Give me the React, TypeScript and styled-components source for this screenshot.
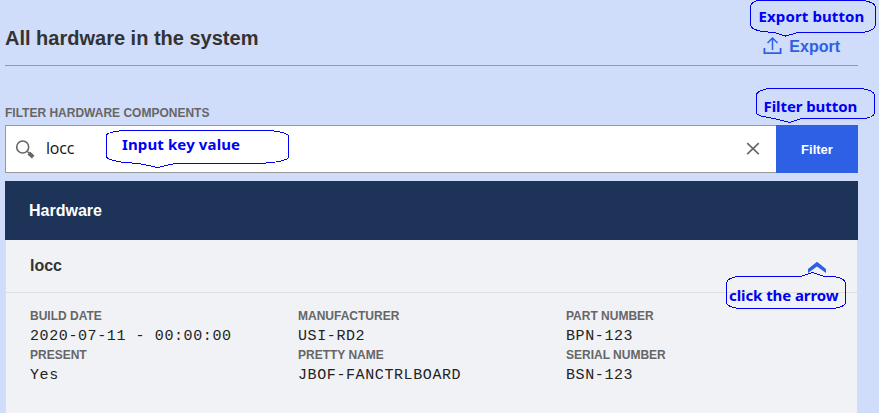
import React from 'react';
import styled, { createGlobalStyle } from 'styled-components';

const GlobalStyle = createGlobalStyle`
  *, *::before, *::after { box-sizing: border-box; }
  body {
    margin: 0;
    background: #cfdcfa;
    color: #333;
    font-family: "Liberation Sans", Arial, sans-serif;
    overflow: hidden;
  }
`;

const Page = styled.main`
  position: relative;
  width: 879px;
  height: 413px;
  padding: 0 21px 0 5px;
  overflow: hidden;
  display: flex;
  flex-direction: column;
`;

const Header = styled.header`
  display: flex;
  justify-content: space-between;
  align-items: flex-start;
  height: 66px;
  flex: none;
  border-bottom: 1px solid #999;
`;

const Title = styled.h1`
  margin: 26px 0 0;
  font-size: 20px;
  line-height: 24px;
  font-weight: 700;
  white-space: nowrap;
`;

const ExportButton = styled.button`
  display: flex;
  align-items: flex-start;
  gap: 7px;
  margin: 37px 18px 0 0;
  padding: 0;
  border: 0;
  background: none;
  color: #2d60e5;
  font: 700 16px/20px "Liberation Sans", Arial, sans-serif;

  svg {
    margin-top: -1px;
  }
`;

const FilterLabel = styled.label`
  margin-top: 39px;
  height: 20px;
  flex: none;
  color: #666;
  font-size: 12px;
  line-height: 16px;
  font-weight: 700;
  white-space: nowrap;
`;

const FilterBar = styled.div`
  display: flex;
  height: 48px;
  flex: none;
`;

const SearchField = styled.div`
  display: flex;
  align-items: center;
  flex: 1;
  padding: 0 16px 0 9px;
  border: 1px solid #999;
  border-right: 0;
  background: #fff;
`;

const SearchValue = styled.span`
  flex: 1;
  margin: -2px 0 0 11px;
  color: #111;
  font: 16px/20px "Open Sans", sans-serif;
  letter-spacing: -0.2px;
`;

const FilterButton = styled.button`
  width: 82px;
  border: 0;
  padding: 1px 0 0;
  background: #2d60e5;
  color: #fff;
  font: 700 13px/16px "Liberation Sans", Arial, sans-serif;
`;

const Table = styled.section`
  display: flex;
  flex-direction: column;
  flex: 1;
  margin-top: 8px;
`;

const TableHead = styled.div`
  height: 59px;
  padding: 20px 24px 0;
  background: #1e3358;
  color: #fff;
  font-size: 16px;
  line-height: 20px;
  font-weight: 700;
`;

const TableBody = styled.div`
  flex: 1;
  border: solid #dcdee2;
  border-width: 0 1px;
  background: #f0f2f6;
`;

const Row = styled.div`
  display: flex;
  justify-content: space-between;
  height: 53px;
  padding: 16px 30px 0 24px;
  border-bottom: 1px solid #dcdee2;
  font-size: 16px;
  line-height: 20px;
  font-weight: 700;
`;

const ToggleIcon = styled.svg`
  margin-top: 5px;
`;

const Details = styled.dl`
  display: grid;
  grid-template-columns: 268px 268px 1fr;
  grid-auto-rows: 39px;
  margin: 0;
  padding: 14px 0 0 24px;
`;

const Property = styled.div`
  display: flex;
  flex-direction: column;
`;

const PropertyName = styled.dt`
  height: 19px;
  color: #666;
  font-size: 12px;
  line-height: 18px;
  font-weight: 700;
  white-space: nowrap;
`;

const PropertyValue = styled.dd`
  margin: 0;
  height: 20px;
  color: #222;
  font: 15px/21px "Courier New", "Liberation Mono", monospace;
  letter-spacing: 0.6px;
  white-space: pre;
`;

const CalloutOutlines = styled.svg`
  position: absolute;
  inset: 0;
  pointer-events: none;
`;

const CalloutText = styled.span<{ $x: number; $y: number; $spacing: number }>`
  position: absolute;
  left: ${(p) => p.$x}px;
  top: ${(p) => p.$y}px;
  color: #0000f5;
  font: 700 15px/20px "Noto Sans", sans-serif;
  letter-spacing: ${(p) => p.$spacing}px;
  white-space: nowrap;
`;

const properties = [
  ['BUILD DATE', '2020-07-11 - 00:00:00'],
  ['MANUFACTURER', 'USI-RD2'],
  ['PART NUMBER', 'BPN-123'],
  ['PRESENT', 'Yes'],
  ['PRETTY NAME', 'JBOF-FANCTRLBOARD'],
  ['SERIAL NUMBER', 'BSN-123'],
];

const callouts = [
  { text: 'Export button', x: 758.5, y: 6, spacing: 0.12 },
  { text: 'Filter button', x: 763.5, y: 96, spacing: -0.08 },
  { text: 'Input key value', x: 122, y: 134, spacing: 0.12 },
  { text: 'click the arrow', x: 729, y: 285, spacing: -0.08 },
];

const outlines = [
  'M757.5 .5H863.5Q875.5 2.5 875.5 7.5V24.5Q875.5 30.5 863 32.5H798L785.5 36L774 32.5L762.5 31.5Q750.5 29.5 750.5 24.5V7.5Q750.5 2.5 757.5 .5Z',
  'M769 88.5H862Q874.5 90.5 874.5 95.5V112.5Q874.5 118 862 118.5H802L789.5 122.5L778 119.5L769 117.5Q756.5 116 756.5 112.5V95.5Q756.5 90.5 769 88.5Z',
  'M124 130.5H270Q288.5 132.5 288.5 136.5V156.5Q288.5 162 259 163.5H175L157.5 167.5L139 163.5L124 162.5Q106.5 160 106.5 156.5V135.5Q106.5 132 124 130.5Z',
  'M738 276.5H801L812 272.5L825 276.5H833Q845.5 278 845.5 283.5V302.5Q845.5 306.5 834 308.5H738Q726.5 306.5 726.5 302.5V283.5Q726.5 278 738 276.5Z',
];

export default function App() {
  return (
    <>
      <GlobalStyle />
      <Page>
        <Header>
          <Title>All hardware in the system</Title>
          <ExportButton>
            <svg width="19" height="19" viewBox="0 0 19 19" fill="none" stroke="currentColor" strokeWidth="1.5">
              <path d="M9.5 14V2M4.5 7L9.5 2L14.5 7" />
              <path d="M1.4 12V17.2H17.6V12" strokeWidth="1.8" />
            </svg>
            Export
          </ExportButton>
        </Header>
        <FilterLabel>FILTER HARDWARE COMPONENTS</FilterLabel>
        <FilterBar>
          <SearchField>
            <svg width="20" height="20" viewBox="0 0 20 20" fill="none" stroke="#666">
              <circle cx="7.7" cy="8" r="6" strokeWidth="1.6" />
              <path d="M12 12.3L14 14" strokeWidth="1.3" />
              <path d="M13.7 14L18.2 18" strokeWidth="3.8" />
            </svg>
            <SearchValue>locc</SearchValue>
            <svg width="14" height="14" viewBox="0 0 14 14" stroke="#666" strokeWidth="1.6">
              <path d="M1.2 1.2L12.8 12.2M12.8 1.2L1.2 12.2" />
            </svg>
          </SearchField>
          <FilterButton>Filter</FilterButton>
        </FilterBar>
        <Table>
          <TableHead>Hardware</TableHead>
          <TableBody>
            <Row>
              locc
              <ToggleIcon width="20" height="12" viewBox="0 0 20 12" fill="#2d60e5">
                <path d="M1 8L10 0.8L19 8V12L10 5.4L1 12Z" />
              </ToggleIcon>
            </Row>
            <Details>
              {properties.map(([name, value]) => (
                <Property key={name}>
                  <PropertyName>{name}</PropertyName>
                  <PropertyValue>{value}</PropertyValue>
                </Property>
              ))}
            </Details>
          </TableBody>
        </Table>
        <CalloutOutlines width="879" height="413" viewBox="0 0 879 413" fill="none" stroke="#0000f5" shapeRendering="crispEdges">
          {outlines.map((d) => (
            <path key={d} d={d} />
          ))}
        </CalloutOutlines>
        {callouts.map((c) => (
          <CalloutText key={c.text} $x={c.x} $y={c.y} $spacing={c.spacing}>
            {c.text}
          </CalloutText>
        ))}
      </Page>
    </>
  );
}
